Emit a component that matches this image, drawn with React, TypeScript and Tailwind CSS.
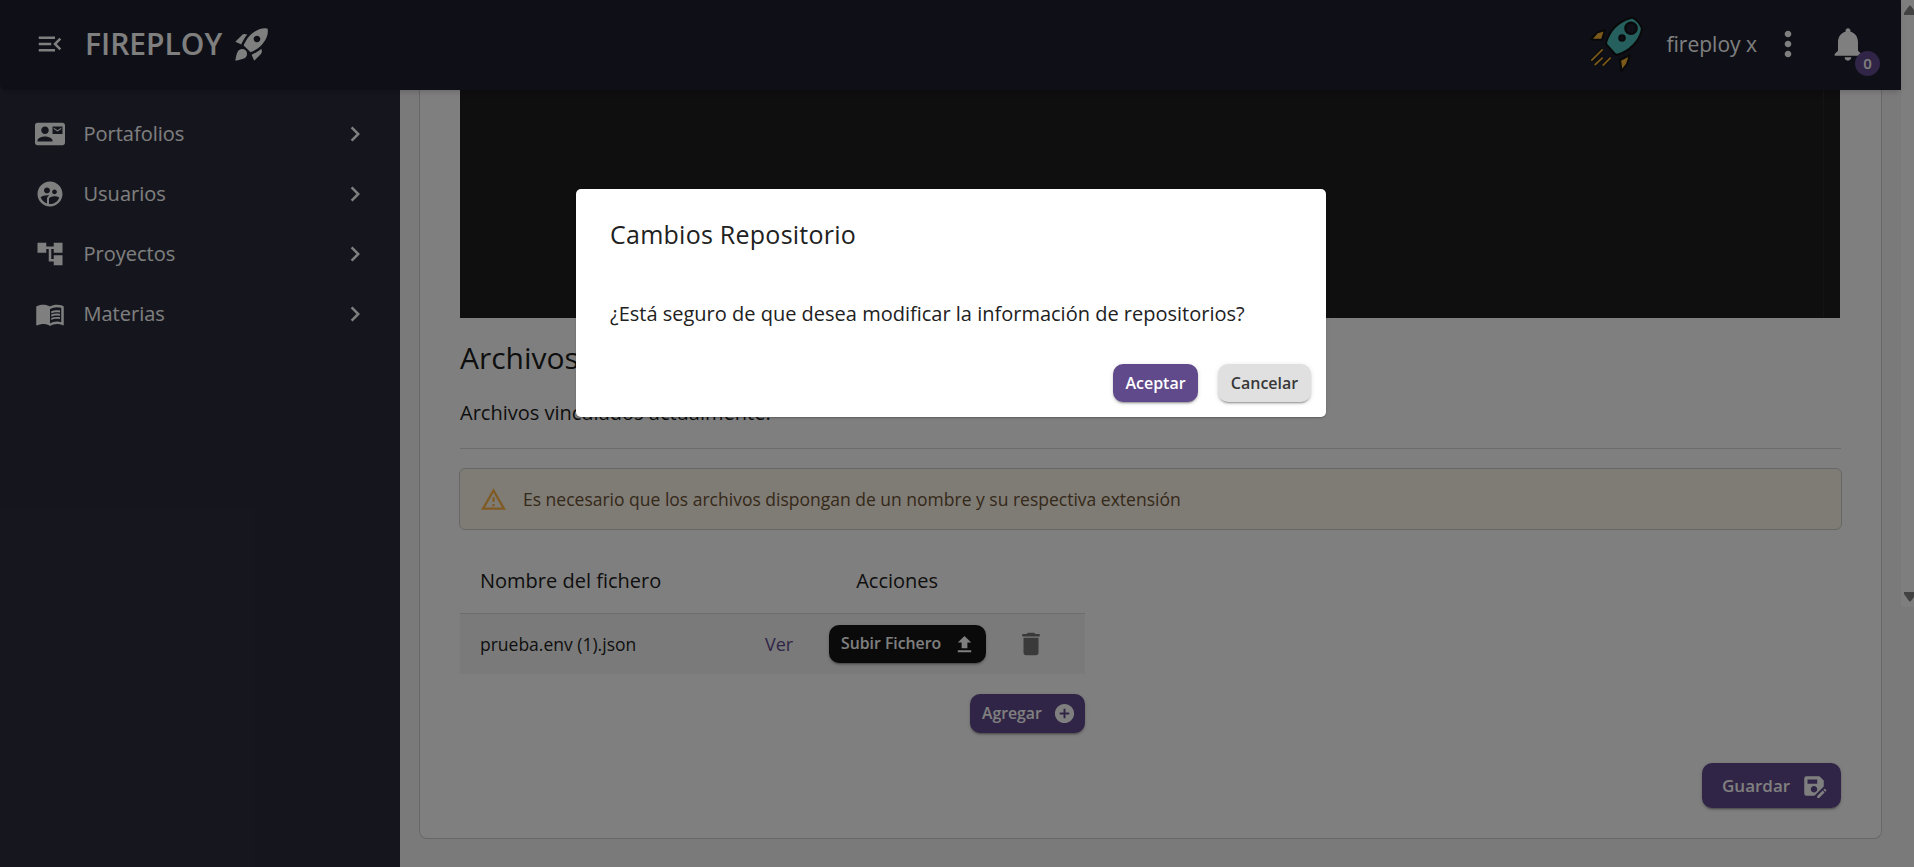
import type { ReactNode } from "react";
import type { IconType } from "react-icons";
import {
  MdAccountTree, MdAddCircle, MdChevronRight, MdContactMail, MdDelete, MdMenuBook, MdMenuOpen,
  MdMoreVert, MdNotifications, MdOutlineWarningAmber, MdRocketLaunch, MdSaveAs,
  MdSupervisedUserCircle, MdUpload,
} from "react-icons/md";

const shadow =
  "shadow-[0px_3px_1px_-2px_rgba(0,0,0,0.2),0px_2px_2px_0px_rgba(0,0,0,0.14),0px_1px_5px_0px_rgba(0,0,0,0.12)]";

function Button({ className, children }: { className: string; children: ReactNode }) {
  return (
    <button className={`flex items-center rounded-[10px] text-left font-semibold whitespace-nowrap ${shadow} ${className}`}>
      {children}
    </button>
  );
}

const menu: { label: string; icon: IconType }[] = [
  { label: "Portafolios", icon: MdContactMail },
  { label: "Usuarios", icon: MdSupervisedUserCircle },
  { label: "Proyectos", icon: MdAccountTree },
  { label: "Materias", icon: MdMenuBook },
];

function RocketLogo() {
  return (
    <svg width="60" height="60" viewBox="0 0 60 60" stroke="#121212" strokeWidth="2" strokeLinejoin="round">
      <path d="M44.5 4Q46 3.5 47.5 4.2Q53 7.5 55.7 13.6Q56 15 55.5 17C53 27 44 37 31.5 40.8Q30 41 28.5 39.5L20.8 31Q19.8 29.500 20.2 28C24 16 33 7.500 44.5 4Z" fill="#4ac0bd" />
      <circle cx="45" cy="14.3" r="5.8" fill="#1d1f2e" />
      <circle cx="36" cy="24" r="2.8" fill="#1d1f2e" />
      <path d="M19 16L11 18.500L5 25.500L16 25.700Z" fill="#f5b335" />
      <path d="M44 41L34 46L35.500 57L41 50Z" fill="#f5b335" />
      <path d="M16.700 35.300L5.300 46.700M16.700 43.700L8.700 51M24.700 43.700L16.700 51.700" strokeWidth="3.600" />
      <path d="M16.700 35.300L5.300 46.700M16.700 43.700L8.700 51M24.700 43.700L16.700 51.700" stroke="#f5b335" strokeWidth="1.700" />
    </svg>
  );
}

function Header() {
  return (
    <header className="z-10 flex h-[90px] shrink-0 items-center rounded-bl-md bg-[#1d1f2e] pr-[33px] pb-[2px] pl-[35px] text-white shadow-md">
      <MdMenuOpen className="size-[30px]" />
      <h1 className="ml-5 text-[30px] leading-10 font-semibold">FIREPLOY</h1>
      <MdRocketLaunch className="ml-[10px] size-10" />
      <div className="ml-auto flex items-center">
        <RocketLogo />
        <span className="ml-[21px] pt-[2px] text-[21px]">fireploy x</span>
        <MdMoreVert className="ml-[11px] size-10" />
        <div className="relative ml-5 flex">
          <MdNotifications className="size-10" />
          <span className="absolute top-[27px] left-[27px] flex size-[25px] items-center justify-center rounded-full bg-[#614a8c] text-[15px] font-semibold">0</span>
        </div>
      </div>
    </header>
  );
}

function Sidebar() {
  return (
    <nav className="flex w-[400px] shrink-0 flex-col bg-[#2b2c3b] pt-[14px] text-white">
      {menu.map(({ label, icon: Icon }) => (
        <div key={label} className="flex h-[60px] items-center pr-[30px] pl-[35px]">
          <Icon className="size-[30px]" />
          <span className="ml-[18.5px] text-xl">{label}</span>
          <MdChevronRight className="ml-auto size-[30px]" />
        </div>
      ))}
    </nav>
  );
}

function Content() {
  return (
    <main className="flex min-w-0 flex-1 flex-col bg-[#f5f5f5] px-[19px]">
      <section className="flex h-[749px] flex-col rounded-b-lg border border-t-0 border-[#cfcfcf] bg-white px-10 text-[#1c1c1c]">
        <div className="mr-px flex h-[228px] shrink-0 justify-end bg-[#1e1e1e] pr-4">
          <div className="w-px bg-[#292929]" />
        </div>
        <h2 className="mt-[18px] text-[30px] leading-[44px]">Archivos</h2>
        <p className="mt-[18px] text-xl leading-[30px]">Archivos vinculados actualmente:</p>
        <hr className="mt-5 border-[#d8d8d8]" />
        <div className="-mx-px mt-[19px] flex h-[62px] shrink-0 items-center rounded-md border border-[#cfcfcf] bg-[#fef6eb] pl-5 text-[17.5px] text-[#6a5233]">
          <MdOutlineWarningAmber className="size-[27px] text-[#ffb547]" />
          <span className="ml-4">Es necesario que los archivos dispongan de un nombre y su respectiva extensión</span>
        </div>
        <div className="mt-[19px] w-[625px]">
          <div className="flex h-[65px] items-center border-b border-[#d8d8d8] pl-5 text-xl">
            <span>Nombre del fichero</span>
            <span className="ml-[195px]">Acciones</span>
          </div>
          <div className="flex h-[60px] items-center bg-[#f5f5f5] pl-5 text-[17.5px]">
            <span className="w-[285px]">prueba.env (1).json</span>
            <span className="w-[64px] text-lg text-[#614a8c]">Ver</span>
            <Button className="h-[38px] w-[157px] bg-[#151515] pl-3 text-[15.8px] text-white">
              <span className="w-[112px]">Subir Fichero</span>
              <MdUpload className="size-[23px]" />
            </Button>
            <MdDelete className="ml-[30px] size-[30px] text-[#757575]" />
          </div>
          <div className="mt-5 flex justify-end">
            <Button className="h-[39px] w-[115px] bg-[#614a8c] pl-3 text-[15.8px] text-white">
              <span className="w-[71px]">Agregar</span>
              <MdAddCircle className="size-[23px]" />
            </Button>
          </div>
        </div>
        <div className="mt-[30px] flex justify-end">
          <Button className="h-[45px] w-[139px] bg-[#614a8c] pl-5 text-[17px] text-white">
            <span className="w-[79px]">Guardar</span>
            <MdSaveAs className="size-[26px]" />
          </Button>
        </div>
      </section>
    </main>
  );
}

function Scrollbar() {
  return (
    <div className="w-[13px] shrink-0 bg-[#f5f5f5]">
      <div className="flex h-[607px] flex-col items-end justify-between overflow-hidden bg-[#fcfcfc] py-[5px]">
        <svg width="10" height="10" viewBox="0 0 10 10" fill="#858585"><path d="M0 10V8L5 1Q6 0 7 1L12 8V10Z" /></svg>
        <svg width="10" height="10" viewBox="0 0 10 10" fill="#858585"><path d="M0 0V2L5 9Q6 10 7 9L12 2V0Z" /></svg>
      </div>
    </div>
  );
}

function ConfirmDialog() {
  return (
    <div className="absolute inset-0 z-20 flex items-start justify-center bg-black/50 pt-[189px] pr-3">
      <div role="dialog" className="flex h-[228px] w-[750px] flex-col rounded-[5px] bg-white text-[#212121] shadow-[0px_1px_1px_rgba(0,0,0,0.14),0px_1px_3px_rgba(0,0,0,0.12)]">
        <h2 className="mt-[25px] ml-[34px] text-[25px] leading-10 tracking-[0.01em]">Cambios Repositorio</h2>
        <p className="mt-[45px] ml-[34px] text-xl leading-[30px]">¿Está seguro de que desea modificar la información de repositorios?</p>
        <div className="mt-[35px] mr-[15px] flex justify-end gap-5">
          <Button className="h-[38px] w-[85px] justify-center bg-[#614a8c] text-base text-white">Aceptar</Button>
          <Button className="h-[38px] w-[93px] justify-center bg-[#e0e0e0] text-base text-[#383838]">Cancelar</Button>
        </div>
      </div>
    </div>
  );
}

export default function App() {
  return (
    <div className="relative flex h-[867px] w-[1914px] overflow-hidden font-['Open_Sans','Noto_Sans',sans-serif]">
      <div className="flex min-w-0 flex-1 flex-col bg-[#2b2c3b]">
        <Header />
        <div className="flex flex-1">
          <Sidebar />
          <Content />
        </div>
      </div>
      <Scrollbar />
      <ConfirmDialog />
    </div>
  );
}
